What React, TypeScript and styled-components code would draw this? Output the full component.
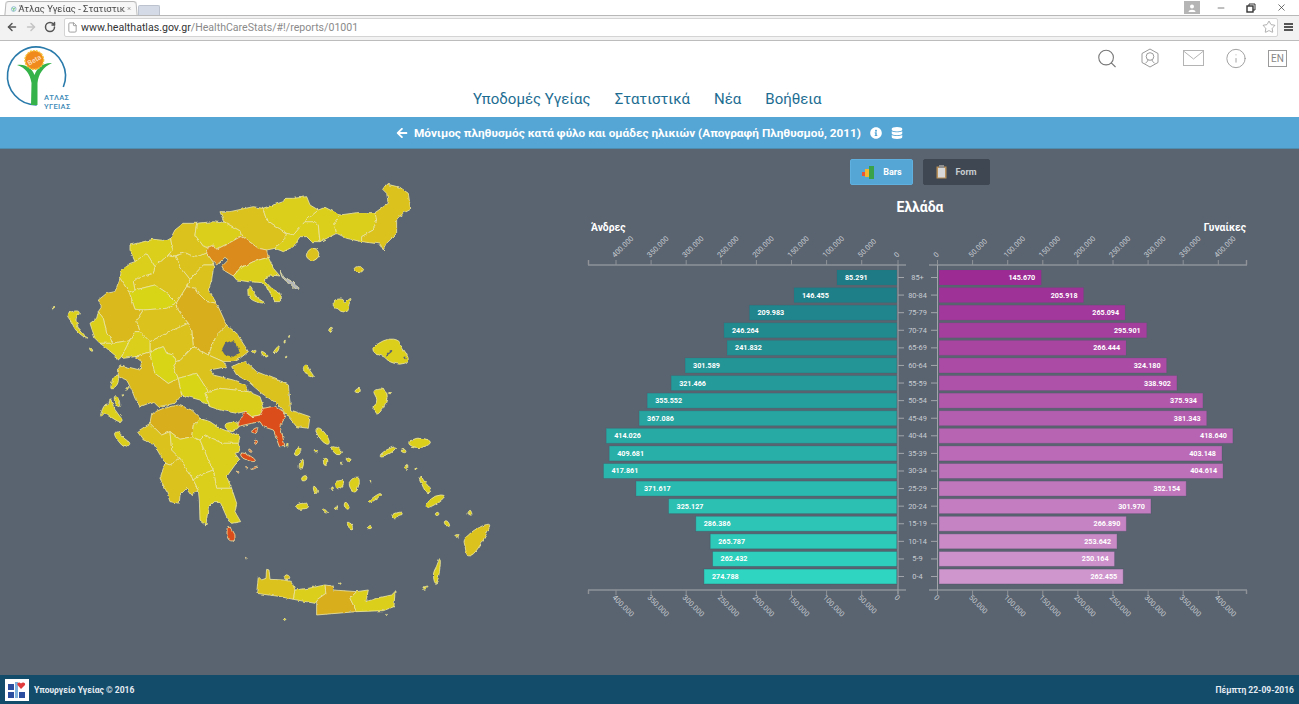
import React from 'react';
import styled, { createGlobalStyle } from 'styled-components';
import { ArrowLeft, ArrowRight, RotateCw, File, Star, Search, Info, X, Minus } from 'lucide-react';
import { FaArrowLeft, FaInfoCircle, FaDatabase } from 'react-icons/fa';

const GlobalStyle = createGlobalStyle`
  html, body { margin: 0; padding: 0; background: #fff; overflow: hidden; }
  body { font-family: Roboto, "Noto Sans", sans-serif; }
`;

const Page = styled.div`
  width: 1299px;
  height: 704px;
  display: flex;
  flex-direction: column;
`;

/* browser chrome */
const TabStrip = styled.div`
  height: 15px;
  display: flex;
  align-items: flex-end;
  padding-left: 5px;
  background: #fff;
`;
const Tab = styled.div`
  width: 132px;
  height: 14px;
  box-sizing: border-box;
  display: flex;
  align-items: center;
  gap: 2px;
  padding: 0 5px 0 5px;
  background: #f7f7f7;
  border: 1px solid #b8b8b8;
  border-bottom: none;
  border-radius: 3px 3px 0 0;
  transform: perspective(40px) rotateX(3deg);
`;
const TabTitle = styled.span`
  flex: 1;
  font-size: 9.4px;
  color: #444;
  white-space: nowrap;
`;
const NewTab = styled.div`
  width: 20px;
  height: 9px;
  margin-left: 1px;
  background: #d5dbe6;
  border: 1px solid #bcc3cf;
  border-bottom: none;
  border-radius: 2px 2px 0 0;
`;
const WindowBar = styled.div`
  flex: 1;
  align-self: flex-start;
  display: flex;
  justify-content: flex-end;
  align-items: center;
  height: 15px;
  padding-right: 3px;
  color: #333;
`;
const UserBadge = styled.div`
  width: 16px;
  height: 13px;
  margin-right: 6px;
  background: #b5b5b5;
  display: flex;
  align-items: center;
  justify-content: center;
`;
const WinButton = styled.div`
  width: 30px;
  display: flex;
  justify-content: center;
`;
const Toolbar = styled.div`
  height: 26px;
  box-sizing: border-box;
  display: flex;
  align-items: center;
  padding: 0 6px 2px 6px;
  background: #f2f2f2;
  border-top: 1px solid #b8b8b8;
  border-bottom: 1px solid #bcbcbc;
  color: #555;
`;
const NavGlyphs = styled.div`
  width: 58px;
  display: flex;
  gap: 7px;
`;
const AddressBox = styled.div`
  flex: 1;
  height: 19px;
  box-sizing: border-box;
  display: flex;
  align-items: center;
  gap: 3px;
  padding: 0 1px 0 2px;
  background: #fff;
  border: 1px solid #d4d4d4;
  border-radius: 2px;
  font-size: 10.6px;
  color: #8a8a8a;
`;
const Host = styled.span`
  color: #333;
`;
const UrlText = styled.span`
  flex: 1;
`;
const MenuLines = styled.div`
  width: 9px;
  height: 8px;
  margin-left: 6px;
  border-top: 2px solid #555;
  border-bottom: 2px solid #555;
  position: relative;
  box-sizing: border-box;
  &::after {
    content: '';
    position: absolute;
    left: 0;
    right: 0;
    top: 1px;
    height: 2px;
    background: #555;
  }
`;

/* site header */
const SiteHeader = styled.header`
  height: 76px;
  display: flex;
  background: #fff;
`;
const LogoSlot = styled.div`
  width: 473px;
  flex: none;
  padding-left: 5px;
  box-sizing: border-box;
`;
const MainNav = styled.nav`
  flex: 1;
  display: flex;
  align-items: flex-end;
  gap: 24px;
  padding-bottom: 8px;
`;
const NavLink = styled.a`
  font-size: 15px;
  color: #1d6d92;
  line-height: 20px;
`;
const HeaderIcons = styled.div`
  display: flex;
  align-self: flex-start;
  align-items: center;
  gap: 21px;
  padding: 6px 12px 0 0;
  color: #8d8d8d;
`;
const IconCell = styled.div<{ $tone?: string }>`
  width: 22px;
  height: 22px;
  display: flex;
  align-items: center;
  justify-content: center;
  color: ${(p) => p.$tone || '#8d8d8d'};
`;
const LangBox = styled.div`
  width: 19px;
  height: 17px;
  box-sizing: border-box;
  border: 1px solid #9a9a9a;
  font-size: 10px;
  line-height: 15px;
  text-align: center;
  color: #888;
`;

/* title bar */
const TitleBar = styled.div`
  height: 32px;
  flex: none;
  box-sizing: border-box;
  display: flex;
  align-items: center;
  justify-content: center;
  background: #56a6d5;
  border-bottom: 1px solid #4f8db0;
  color: #fff;
`;
const TitleText = styled.span`
  font-size: 11.8px;
  font-weight: 700;
  margin: 0 9px 0 6px;
  white-space: nowrap;
`;
const TitleIcons = styled.div`
  display: flex;
  align-items: center;
  gap: 9px;
`;

/* main */
const Main = styled.main`
  flex: 1;
  display: flex;
  background: #5a6471;
`;
const MapPane = styled.div`
  width: 580px;
  flex: none;
`;
const MapSvg = styled.svg`
  display: block;
`;
const ChartPane = styled.div`
  width: 675px;
  display: flex;
  flex-direction: column;
  align-items: stretch;
  padding-top: 10px;
`;
const ToggleRow = styled.div`
  display: flex;
  justify-content: center;
  gap: 10px;
  padding-left: 5px;
`;
const ToggleButton = styled.button<{ $active?: boolean }>`
  height: 26px;
  width: ${(p) => (p.$active ? '63px' : '67px')};
  box-sizing: border-box;
  display: flex;
  align-items: center;
  justify-content: center;
  gap: 8px;
  padding: 0;
  border: 1px solid ${(p) => (p.$active ? '#5fb0de' : '#3f4852')};
  border-radius: 2px;
  background: ${(p) => (p.$active ? '#56a6d5' : '#3f4852')};
  color: ${(p) => (p.$active ? '#fff' : '#c8ccd0')};
  font-family: Roboto, sans-serif;
  font-size: 9px;
  font-weight: 700;
`;
const ChartTitle = styled.h2`
  margin: 13px 0 0;
  padding-left: 5px;
  font-size: 14px;
  font-weight: 700;
  line-height: 18px;
  text-align: center;
  color: #fff;
`;
const SideLabels = styled.div`
  display: flex;
  justify-content: space-between;
  padding: 6px 9px 0 11px;
  font-size: 10.3px;
  font-weight: 700;
  line-height: 12px;
  color: #fff;
`;
const PyramidSvg = styled.svg`
  display: block;
  margin-top: 1px;
`;
const TickText = styled.text`
  font-family: Roboto, sans-serif;
  font-size: 7.4px;
  fill: #c9cdd2;
`;
const AgeText = styled.text`
  font-family: Roboto, sans-serif;
  font-size: 7.4px;
  fill: #c9cdd2;
  text-anchor: middle;
`;
const BarValue = styled.text`
  font-family: Roboto, sans-serif;
  font-size: 7.2px;
  font-weight: 700;
  fill: #fff;
`;

/* footer */
const Footer = styled.footer`
  height: 29px;
  flex: none;
  display: flex;
  align-items: center;
  justify-content: space-between;
  padding: 0 5px;
  background: #134b6b;
  color: #e6edf2;
  font-size: 8.5px;
  font-weight: 700;
`;
const FooterBrand = styled.div`
  display: flex;
  align-items: center;
  gap: 5px;
`;
const MinistryMark = styled.div`
  width: 24px;
  height: 22px;
  background: #fff;
  display: flex;
  align-items: center;
  justify-content: center;
`;

const rows: [string, number, number][] = [
  ['85+', 85291, 145670],
  ['80-84', 146455, 205918],
  ['75-79', 209983, 265094],
  ['70-74', 246264, 295901],
  ['65-69', 241832, 266444],
  ['60-64', 301589, 324180],
  ['55-59', 321466, 338902],
  ['50-54', 355552, 375934],
  ['45-49', 367086, 381343],
  ['40-44', 414026, 418640],
  ['35-39', 409681, 403148],
  ['30-34', 417861, 404614],
  ['25-29', 371617, 352154],
  ['20-24', 325127, 301970],
  ['15-19', 286386, 266890],
  ['10-14', 265787, 253642],
  ['5-9', 262432, 250164],
  ['0-4', 274788, 262455],
];

const fmt = (n: number) => n.toLocaleString('de-DE');
const mix = (a: number[], b: number[], t: number) =>
  `rgb(${a.map((v, i) => Math.round(v + (b[i] - v) * t)).join(',')})`;

const ticks = [0, 50000, 100000, 150000, 200000, 250000, 300000, 350000, 400000];
const SCALE = 0.000702;
const LEFT_ZERO = 896.8;
const RIGHT_ZERO = 937.5;

const Pyramid = () => (
  <PyramidSvg width={675} height={395} viewBox="580 235 675 395">
    {[265, 590].map((y) => (
      <g key={y} stroke="#8f9398" strokeWidth={1.4}>
        <line x1={588} x2={906} y1={y} y2={y} />
        <line x1={929} x2={1247} y1={y} y2={y} />
        <line x1={588.5} x2={588.5} y1={y} y2={y === 265 ? y - 5 : y + 4} />
        <line x1={1246.5} x2={1246.5} y1={y} y2={y === 265 ? y - 5 : y + 4} />
      </g>
    ))}
    <line x1={898} x2={898} y1={265} y2={594} stroke="#a2a6ab" strokeWidth={1} />
    <line x1={937.5} x2={937.5} y1={265} y2={594} stroke="#a2a6ab" strokeWidth={1} />
    {ticks.map((t) => {
      const lx = t === 0 ? 898 : LEFT_ZERO - t * SCALE;
      const rx = RIGHT_ZERO + t * SCALE;
      return (
        <g key={t}>
          <line x1={lx} x2={lx} y1={260} y2={265} stroke="#8f9398" />
          <line x1={rx} x2={rx} y1={260} y2={265} stroke="#8f9398" />
          <line x1={lx} x2={lx} y1={590} y2={595} stroke="#8f9398" />
          <line x1={rx} x2={rx} y1={590} y2={595} stroke="#8f9398" />
          <TickText transform={`translate(${lx - 1} 258) rotate(-45)`}>{fmt(t)}</TickText>
          <TickText transform={`translate(${rx - 1} 258) rotate(-45)`}>{fmt(t)}</TickText>
          <TickText transform={`translate(${lx - 2} 596) rotate(45) translate(0 3)`}>{fmt(t)}</TickText>
          <TickText transform={`translate(${rx - 2} 596) rotate(45) translate(0 3)`}>{fmt(t)}</TickText>
        </g>
      );
    })}
    {rows.map(([age, men, women], i) => {
      const y = 270 + i * 17.59;
      const t = i / (rows.length - 1);
      const mw = men * SCALE;
      const ww = women * SCALE;
      return (
        <g key={age}>
          <rect
            x={LEFT_ZERO - mw}
            y={y}
            width={mw}
            height={15}
            fill={mix([30, 122, 133], [47, 213, 192], t)}
            stroke={`rgba(60,70,90,${0.05 + t * 0.3})`}
          />
          <rect
            x={939}
            y={y}
            width={ww}
            height={15}
            fill={mix([156, 44, 148], [207, 150, 205], t)}
            stroke={`rgba(60,70,90,${0.05 + t * 0.3})`}
          />
          <BarValue x={LEFT_ZERO - mw + 8} y={y + 10}>
            {fmt(men)}
          </BarValue>
          <BarValue x={939 + ww - 6} y={y + 10} textAnchor="end">
            {fmt(women)}
          </BarValue>
          <line x1={898} x2={904} y1={y + 7.5} y2={y + 7.5} stroke="#a2a6ab" />
          <line x1={931} x2={937} y1={y + 7.5} y2={y + 7.5} stroke="#a2a6ab" />
          <AgeText x={917.5} y={y + 10}>
            {age}
          </AgeText>
        </g>
      );
    })}
  </PyramidSvg>
);

/* map: shapes are traced per reference crop, each group has its own origin */
const Y = '#dccf1b';
const Y2 = '#dbc21b';
const B = '#d8d516';
const D = '#d9ae1c';
const D2 = '#d9b91c';
const O = '#db8a1c';
const R = '#dc4e1c';
const G = '#b4b7bc';
const BG = '#5a6471';

type Shape = [string, string];

const north: Shape[] = [
  [Y, '270,225 340,208 380,212 392,205 398,240 385,255 345,290 320,250 285,275 270,240'],
  [Y2, '392,205 405,180 430,160 470,160 465,195 490,228 505,232 500,250 465,262 435,248 405,258 385,255 398,240'],
  [Y, '470,160 520,155 540,158 552,155 600,182 605,198 575,215 530,238 520,225 505,232 490,228 465,195'],
  [Y2, '540,125 570,125 640,110 668,115 680,150 740,190 735,205 705,235 680,240 655,235 605,198 600,182 552,155'],
  [O, '505,232 520,225 530,238 575,215 605,198 655,235 680,240 685,262 640,275 600,295 580,318 550,300 545,290 565,270 555,262 530,285 515,270 500,250'],
  [Y, '685,262 700,295 720,318 690,315 672,330 695,355 720,370 722,395 705,395 680,350 665,338 625,335 590,330 580,318 600,295 640,275'],
  [Y2, '405,258 435,248 465,262 500,250 515,270 522,285 490,285 450,328 420,290'],
  [Y2, '345,290 385,255 405,258 420,290 450,328 440,350 410,398 390,378 375,365 345,345 285,360 280,335 295,322 340,310'],
  [Y2, '490,285 522,285 520,295 515,330 505,360 530,400 500,395 475,370 465,355 440,350 450,328'],
  [Y, '245,298 270,280 285,275 320,250 345,290 340,310 295,322 280,335 285,360 268,368 240,325'],
  [B, '268,368 285,360 345,345 375,365 390,378 410,398 380,415 310,420 285,418'],
  [D2, '240,325 268,368 285,418 310,420 290,450 300,485 285,485 270,510 220,520 200,490 190,445 175,425 185,410 175,390 200,370 225,365'],
  [Y2, '310,420 380,415 410,398 415,420 445,460 400,480 330,515 300,485 290,450'],
  [D, '410,398 440,350 465,355 475,370 500,395 530,400 560,465 530,495 505,555 460,530 455,480 445,460 415,420'],
  [Y2, '400,480 445,460 455,480 460,530 420,572 410,575 400,555 380,550 370,530 330,545 330,515'],
  [Y2, '560,465 590,490 625,545 600,565 580,575 550,575 505,555 530,495'],
  [BG, '555,520 580,510 590,525 600,548 580,560 555,555 545,540'],
  [Y, '175,425 190,445 200,490 220,520 180,520 165,505 150,460 170,445'],
  [Y, '180,520 220,520 270,510 245,560 235,570 230,560 200,535'],
  [Y, '270,510 285,485 300,485 330,515 330,545 285,560 250,565 245,560'],
];

const northIslands: Shape[] = [
  [Y, '625,345 622,375 640,395 685,402 650,385 635,355'],
  [G, '720,298 725,318 760,335 780,355 770,362 750,340 725,325'],
  [Y, '75,430 115,420 120,432 105,445 115,475 145,508 130,500 105,480 95,455'],
  [Y, '790,590 800,582 808,600 825,622 805,620 790,600'],
  [Y, '630,548 650,538 645,552'],
  [Y, '660,538 690,560 670,562'],
  [Y, '700,545 720,522 715,545 700,553'],
  [Y, '730,515 737,508 735,522'],
  [Y, '745,498 750,495 747,505'],
  [Y, '735,560 742,558 738,566'],
  [Y, '870,475 878,470 875,488 865,485'],
  [Y, '35,410 44,408 40,418'],
  [Y, '148,532 155,535 160,545 150,542'],
];

const south: Shape[] = [
  [D2, '-5,-35 0,-45 60,-30 65,-55 45,-70 90,-85 95,-55 105,-20 145,10 175,-5 185,45 165,70 115,80 100,65 60,80 45,55 35,30 20,0 -5,-10'],
  [B, '90,-85 130,-100 140,-80 160,-75 170,-55 160,-40 175,-5 145,10 105,-20 95,-55'],
  [Y2, '170,-55 180,-58 220,-100 265,-75 310,-55 320,-40 270,-30 280,-15 340,0 380,15 385,35 345,30 300,25 265,35 230,-20 175,-5 160,-40'],
  [B, '175,-5 230,-20 265,35 255,40 270,80 240,60 185,45'],
  [Y, '265,35 300,25 345,30 385,35 420,50 432,85 420,105 395,110 375,95 350,100 300,90 270,80 255,40'],
  [Y2, '335,-40 375,-58 410,-25 460,-5 505,12 512,90 570,110 565,145 530,140 505,110 470,70 425,40 385,5 350,-15'],
  [R, '350,140 375,95 395,110 420,105 430,85 465,78 490,95 495,110 480,135 495,200 478,200 460,150 430,140 420,125 395,130'],
  [D, '95,100 130,85 175,75 215,90 240,115 220,135 215,170 180,178 150,155 125,165 90,130'],
  [Y2, '52,155 90,130 125,165 150,155 155,210 180,235 150,255 135,250 100,190 70,180'],
  [Y, '150,155 180,178 215,170 240,180 255,215 265,240 280,270 240,285 220,300 180,235 155,210'],
  [Y, '215,170 220,135 240,115 270,125 300,145 340,160 360,170 355,190 310,190 255,165 240,180'],
  [Y, '240,180 255,165 310,190 355,190 360,215 345,220 360,240 345,255 320,290 335,325 290,325 280,270 265,240 255,215'],
  [Y2, '180,235 220,300 235,330 215,345 200,325 180,345 178,370 150,365 140,335 120,295 135,250 150,255'],
  [Y, '220,300 240,285 280,270 290,325 335,325 350,370 345,395 362,425 335,430 320,410 300,365 280,365 265,380 258,435 240,420 238,360 235,330'],
  [Y2, '415,590 425,600 438,595 440,568 447,570 450,598 490,600 515,605 525,630 520,658 480,650 410,640'],
  [Y, '525,630 565,625 615,615 618,640 590,660 585,670 520,658'],
  [D, '615,615 635,618 640,630 710,635 690,655 710,695 590,705 590,660 618,640'],
  [Y, '710,635 745,630 738,665 770,655 815,645 825,635 822,680 790,692 710,695 690,655'],
];

const southIslands: Shape[] = [
  [Y, '312,130 350,125 358,140 335,155 320,150'],
  [R, '320,445 328,438 348,465 342,485 322,480'],
  [R, '395,150 415,140 410,158 395,160'],
  [R, '398,182 415,180 408,197'],
  [R, '360,220 375,218 410,240 400,247 365,235'],
  [R, '385,205 395,210 388,218'],
  [R, '390,265 415,257 412,262 395,270'],
  [R, '350,272 358,275 355,282'],
  [R, '375,262 385,262 380,268'],
  [R, '375,530 382,535 380,542'],
  [Y2, '490,592 500,582 512,592 502,604'],
  [Y, '488,718 495,713 500,725'],
  [Y, '658,608 665,610 660,614'],
  [Y, '796,702 803,702 800,708'],
  [Y2, '1105,430 1112,438 1085,490 1060,525 1040,530 1035,495 1030,480 1060,450'],
  [Y, '960,530 962,550 955,600 945,615 938,580 950,560'],
  [Y, '905,625 928,615 915,630'],
  [Y, '755,30 795,25 805,50 790,85 770,108 758,85 775,60'],
  [Y, '705,30 720,22 722,38 705,38'],
  [Y, '805,36 818,40 805,42'],
  [Y, '520,220 540,195 545,215 530,230'],
  [Y, '498,200 503,183 505,198'],
  [Y, '583,150 598,140 625,170 630,195 610,190'],
  [Y, '628,200 655,200 668,220 650,228'],
  [Y, '535,265 543,235 552,240 548,270'],
  [Y, '545,290 560,285 562,300 545,305'],
  [Y, '578,320 585,318 595,335 585,345'],
  [Y, '610,235 625,235 622,258 610,255'],
  [Y, '675,232 698,238 685,250'],
  [Y, '580,210 590,207 594,215 582,216'],
  [Y, '660,245 668,248 664,257'],
  [Y, '645,305 672,298 670,320 650,330'],
  [Y, '683,310 705,288 720,295 715,330 700,340'],
  [Y, '632,325 640,318 640,335'],
  [Y, '530,372 560,368 565,385 530,390'],
  [Y, '605,390 612,385 625,398 617,400'],
  [Y, '640,385 655,378 650,390'],
  [Y, '742,365 780,338 785,345 755,368'],
  [Y, '670,370 680,365 690,385 680,390'],
  [Y, '680,425 698,430 702,445 690,448 682,435'],
  [Y, '740,440 750,435 757,445 745,447'],
  [Y, '818,400 835,398 845,395 848,405 835,405 828,418 820,415'],
  [Y, '895,290 905,288 915,310 935,325 930,340 915,335 905,310'],
  [Y, '915,375 945,345 980,345 960,365 925,385'],
  [Y, '945,400 955,395 958,405 948,408'],
  [Y, '970,425 982,420 992,440 980,440'],
  [Y, '1003,465 1020,463 1018,472 1005,472'],
  [Y, '775,228 800,208 832,197 820,215 795,228'],
  [Y, '862,188 890,172 925,178 935,190 905,205 875,200'],
  [Y, '840,215 855,205 860,220'],
  [Y, '855,255 865,252 862,272 856,270'],
  [Y, '885,262 893,268 885,272'],
  [Y, '1045,395 1052,388 1058,408 1043,402'],
  [Y, '748,305 755,302 752,310'],
];

const thrace: Shape[] = [
  [Y, '68,115 130,95 135,85 160,85 200,80 210,105 235,120 195,155 160,195 140,190 80,150'],
  [Y, '140,190 160,195 195,155 225,155 235,165 240,215 215,215 200,200 180,200 160,230 130,245 105,235 135,205'],
  [Y, '235,120 255,112 300,135 282,160 290,190 240,215 235,165 225,155 195,155'],
  [Y, '300,135 350,128 405,128 410,150 400,180 365,200 365,215 320,205 290,190 282,160'],
  [Y2, '405,128 445,100 440,70 428,58 440,42 480,52 505,70 512,118 490,130 470,145 470,190 440,220 430,240 420,222 365,215 365,200 400,180 410,150'],
];

const thraceIslands: Shape[] = [
  [Y2, '215,232 235,240 238,260 220,275 200,265 198,250'],
  [Y2, '340,295 355,287 375,298 360,310 345,305'],
];

const aegean: Shape[] = [
  [Y, '37,60 70,55 72,70 97,50 85,75 85,97 60,95 55,85 42,85'],
  [Y, '25,150 33,140 38,150 28,160'],
  [Y, '155,205 175,190 205,175 238,180 240,195 260,220 268,245 240,255 205,245 195,230 165,222'],
  [BG, '195,228 210,208 220,212 205,225'],
  [BG, '248,232 255,228 258,240'],
];

const ionian: Shape[] = [
  [Y, '165,270 172,235 192,220 190,250 180,262'],
  [Y, '135,345 150,310 163,315 165,288 178,330 205,360 195,368 165,350 150,335 140,350'],
  [Y, '175,290 187,285 197,320 185,320'],
  [Y, '175,400 190,392 205,415 230,430 210,445 190,425'],
  [Y, '210,268 222,255 215,275'],
  [Y, '200,285 207,283 204,290'],
];

// rounds an island outline through the midpoints of its edges
const roundedPath = (points: string) => {
  const pts = points.split(' ').map((p) => p.split(',').map(Number));
  const mid = (a: number[], b: number[]) => [(a[0] + b[0]) / 2, (a[1] + b[1]) / 2];
  const start = mid(pts[pts.length - 1], pts[0]);
  const segments = pts.map((p, i) => {
    const m = mid(p, pts[(i + 1) % pts.length]);
    return `Q${p[0]} ${p[1]} ${m[0]} ${m[1]}`;
  });
  return `M${start[0]} ${start[1]} ${segments.join(' ')} Z`;
};

const MapGroup = ({ x, y, shapes, rounded }: { x: number; y: number; shapes: Shape[]; rounded?: boolean }) => (
  <g transform={`translate(${x} ${y}) scale(0.3333)`} stroke="#ece6a6" strokeWidth={2.4} strokeLinejoin="round">
    {shapes.map(([fill, points], i) =>
      rounded ? (
        <path key={i} fill={fill} d={roundedPath(points)} stroke={fill === BG ? 'none' : undefined} />
      ) : (
        <polygon key={i} fill={fill} points={points} stroke={fill === BG ? 'none' : undefined} />
      ),
    )}
  </g>
);

const GreeceMap = () => (
  <MapSvg width={580} height={526} viewBox="0 149 580 526">
    <defs>
      <filter id="coast" filterUnits="userSpaceOnUse" x="0" y="149" width="580" height="526">
        <feTurbulence type="fractalNoise" baseFrequency="0.2" numOctaves="2" seed="4" />
        <feDisplacementMap in="SourceGraphic" scale="3" xChannelSelector="R" yChannelSelector="G" />
      </filter>
    </defs>
    <g filter="url(#coast)">
      <MapGroup x={40} y={170} shapes={north} />
      <MapGroup x={40} y={170} shapes={northIslands} rounded />
      <MapGroup x={120} y={380} shapes={south} />
      <MapGroup x={120} y={380} shapes={southIslands} rounded />
      <MapGroup x={240} y={170} shapes={thrace} />
      <MapGroup x={240} y={170} shapes={thraceIslands} rounded />
      <MapGroup x={320} y={280} shapes={aegean} rounded />
      <MapGroup x={55} y={300} shapes={ionian} rounded />
    </g>
  </MapSvg>
);

const Logo = () => (
  <svg width={72} height={72} viewBox="0 0 72 72">
    <path d="M31.7 64 A29 29 0 1 1 58.3 46" fill="none" stroke="#2a7bab" strokeWidth={1.6} />
    <path
      d="M26 64 L26.5 42 C25 33 21 27 12 24 C20 22.5 27 27 29.5 34 C32 27 38 21.5 47 22 C38 26 33.5 33 32.5 42 L32.5 64 Z"
      fill="#35b34a"
    />
    <circle cx={29.3} cy={19} r={9.3} fill="#f08a1d" stroke="#f6c233" strokeWidth={1.4} strokeDasharray="2 1" />
    <text
      x={29.3}
      y={21.5}
      textAnchor="middle"
      transform="rotate(-30 29.3 19)"
      fontFamily="Roboto, sans-serif"
      fontSize={7}
      fontWeight={700}
      fill="#fbd7b0"
    >
      Beta
    </text>
    <text x={39} y={59} fontFamily="Roboto, sans-serif" fontSize={7.6} fontWeight={500} letterSpacing={0.3} fill="#3f8bb8">
      ΑΤΛΑΣ
    </text>
    <text x={39} y={68} fontFamily="Roboto, sans-serif" fontSize={7.6} fontWeight={500} letterSpacing={0.3} fill="#3f8bb8">
      ΥΓΕΙΑΣ
    </text>
  </svg>
);

const Favicon = () => (
  <svg width={12} height={12} viewBox="0 0 11 11">
    <circle cx={5.5} cy={5.5} r={4.7} fill="none" stroke="#3b86b4" />
    <path d="M2.5 3.5 Q5 4 5.5 6 Q6 4 8.5 3.5 M5.5 5 V10" fill="none" stroke="#35b34a" strokeWidth={1.3} />
  </svg>
);

const UserHexIcon = () => (
  <svg width={22} height={22} viewBox="0 0 22 22" fill="none" stroke="currentColor" strokeWidth={1}>
    <path d="M11 2 L19 6.5 V15.5 L11 20 L3 15.5 V6.5 Z" />
    <circle cx={11} cy={9.5} r={3.8} />
    <path d="M9 13 C9 15 7 15 6 16.5 M13 13 C13 15 15 15 16 16.5" />
  </svg>
);

const EnvelopeIcon = () => (
  <svg width={21} height={16} viewBox="0 0 21 16" fill="none" stroke="currentColor" strokeWidth={1}>
    <rect x={0.5} y={0.5} width={20} height={15} />
    <path d="M0.5 1 L10.5 9 L20.5 1" />
  </svg>
);

const BarsIcon = () => (
  <svg width={14} height={13} viewBox="0 0 14 13">
    <rect x={1} y={6} width={3} height={4} fill="#e8563a" />
    <rect x={4} y={3} width={4} height={8} fill="#f2b632" />
    <rect x={8} y={0} width={5} height={13} fill="#3aa34a" />
  </svg>
);

const ClipboardIcon = () => (
  <svg width={11} height={14} viewBox="0 0 11 14">
    <rect x={0.5} y={1.5} width={10} height={12} fill="#b98f5a" />
    <rect x={2} y={3} width={7} height={9.5} fill="#d8d8d8" />
    <rect x={3} y={0} width={5} height={3} fill="#8f8f8f" />
  </svg>
);

const MinistryIcon = () => (
  <svg width={20} height={18} viewBox="0 0 20 18">
    <rect x={1} y={3} width={6} height={6} fill="#2b4f9e" />
    <rect x={1} y={11} width={6} height={6} fill="#2b4f9e" />
    <rect x={12} y={11} width={6} height={6} fill="#2b4f9e" />
    <path d="M8 1 H11 V17 H8 Z" fill="#7fb2dc" />
    <path d="M14 8 L10.5 4 C9.5 1.5 12.5 0.5 14 2.5 C15.5 0.5 19 1.5 18 4 Z" fill="#e23b3b" />
  </svg>
);

const App = () => (
  <Page>
    <GlobalStyle />
    <TabStrip>
      <Tab>
        <Favicon />
        <TabTitle>Άτλας Υγείας - Στατιστικ</TabTitle>
        <X size={9} strokeWidth={3} color="#555" />
      </Tab>
      <NewTab />
      <WindowBar>
        <UserBadge>
          <svg width={8} height={8} viewBox="0 0 8 8">
            <circle cx={4} cy={2.4} r={2} fill="#fff" />
            <path d="M0.5 8 C0.5 5 7.5 5 7.5 8 Z" fill="#fff" />
          </svg>
        </UserBadge>
        <WinButton>
          <Minus size={10} strokeWidth={1.5} />
        </WinButton>
        <WinButton>
          <svg width={10} height={10} viewBox="0 0 10 10" fill="none" stroke="#333">
            <rect x={1} y={3} width={6} height={6} strokeWidth={1.4} />
            <path d="M3 3 V1 H9 V7 H7" />
          </svg>
        </WinButton>
        <WinButton>
          <X size={11} strokeWidth={1.5} />
        </WinButton>
      </WindowBar>
    </TabStrip>
    <Toolbar>
      <NavGlyphs>
        <ArrowLeft size={12} strokeWidth={3} color="#555" />
        <ArrowRight size={12} strokeWidth={3} color="#c4c4c4" />
        <RotateCw size={12} strokeWidth={3} color="#555" />
      </NavGlyphs>
      <AddressBox>
        <File size={11} color="#999" />
        <UrlText>
          <Host>www.healthatlas.gov.gr</Host>/HealthCareStats/#!/reports/01001
        </UrlText>
        <Star size={14} strokeWidth={1} color="#777" />
      </AddressBox>
      <MenuLines />
    </Toolbar>
    <SiteHeader>
      <LogoSlot>
        <Logo />
      </LogoSlot>
      <MainNav>
        <NavLink>Υποδομές Υγείας</NavLink>
        <NavLink>Στατιστικά</NavLink>
        <NavLink>Νέα</NavLink>
        <NavLink>Βοήθεια</NavLink>
      </MainNav>
      <HeaderIcons>
        <IconCell $tone="#777">
          <Search size={23} strokeWidth={1.2} />
        </IconCell>
        <IconCell $tone="#999">
          <UserHexIcon />
        </IconCell>
        <IconCell $tone="#b4b4b4">
          <EnvelopeIcon />
        </IconCell>
        <IconCell $tone="#999">
          <Info size={23} strokeWidth={1} />
        </IconCell>
        <LangBox>EN</LangBox>
      </HeaderIcons>
    </SiteHeader>
    <TitleBar>
      <FaArrowLeft size={12} />
      <TitleText>Μόνιμος πληθυσμός κατά φύλο και ομάδες ηλικιών (Απογραφή Πληθυσμού, 2011)</TitleText>
      <TitleIcons>
        <FaInfoCircle size={12} />
        <FaDatabase size={12} />
      </TitleIcons>
    </TitleBar>
    <Main>
      <MapPane>
        <GreeceMap />
      </MapPane>
      <ChartPane>
        <ToggleRow>
          <ToggleButton $active>
            <BarsIcon />
            Bars
          </ToggleButton>
          <ToggleButton>
            <ClipboardIcon />
            Form
          </ToggleButton>
        </ToggleRow>
        <ChartTitle>Ελλάδα</ChartTitle>
        <SideLabels>
          <span>Άνδρες</span>
          <span>Γυναίκες</span>
        </SideLabels>
        <Pyramid />
      </ChartPane>
    </Main>
    <Footer>
      <FooterBrand>
        <MinistryMark>
          <MinistryIcon />
        </MinistryMark>
        Υπουργείο Υγείας © 2016
      </FooterBrand>
      <span>Πέμπτη 22-09-2016</span>
    </Footer>
  </Page>
);

export default App;
